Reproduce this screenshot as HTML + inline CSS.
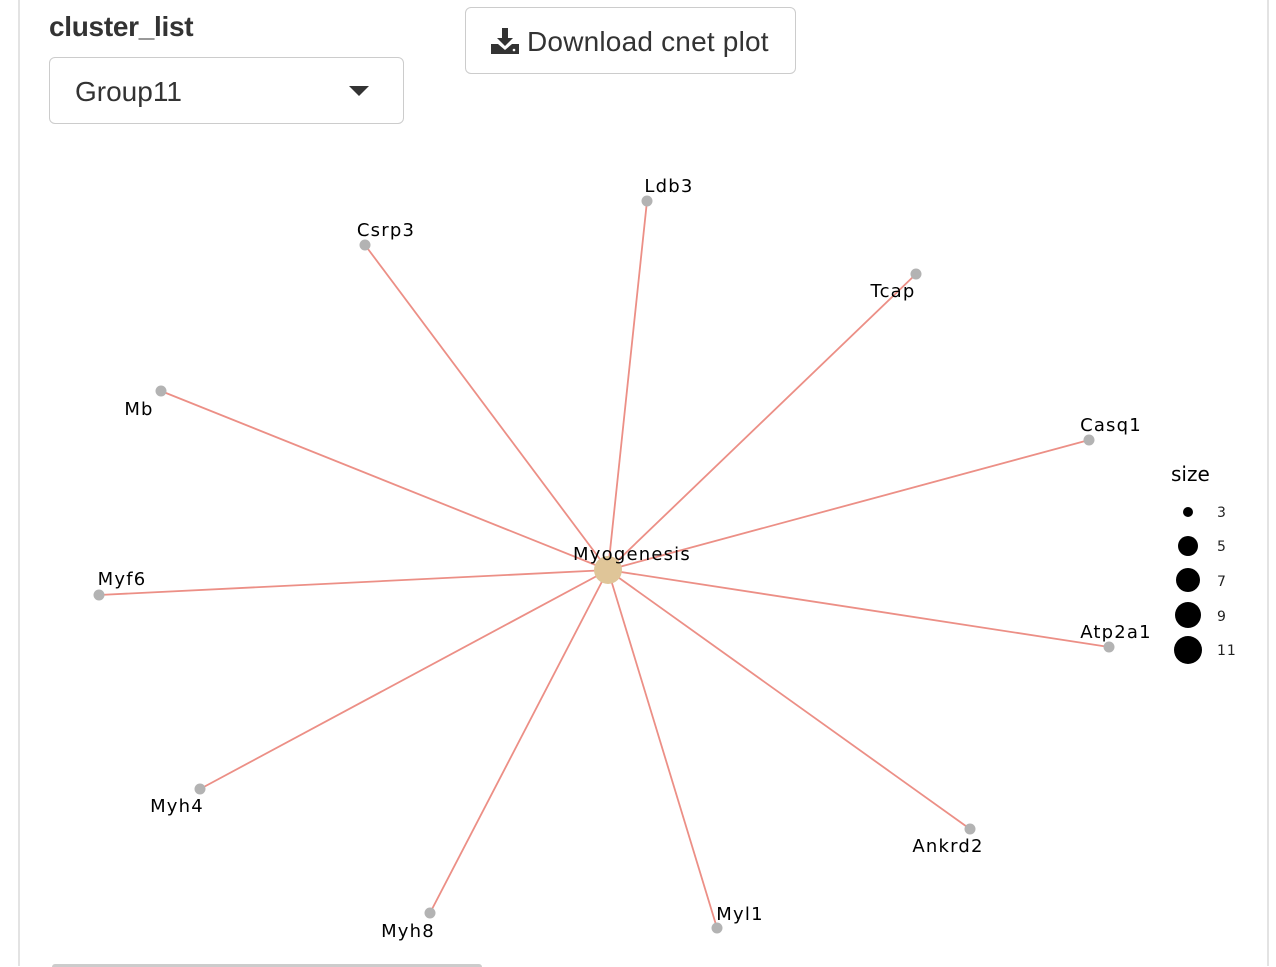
<!DOCTYPE html>
<html><head><meta charset="utf-8"><style>
body{margin:0;width:1276px;height:966px;background:#fff;position:relative;overflow:hidden;font-family:"Liberation Sans",sans-serif;color:#333}
.lb{position:absolute;left:18px;top:0;width:2px;height:966px;background:#e3e3e3}
.rb{position:absolute;left:1267px;top:0;width:2px;height:966px;background:#e3e3e3}
.title{position:absolute;left:49px;top:11px;font-weight:bold;font-size:28px;letter-spacing:-0.3px}
.sel{position:absolute;left:49px;top:57px;width:355px;height:67px;border:1.5px solid #ccc;border-radius:6px;box-sizing:border-box}
.sel span{position:absolute;left:25px;top:18px;font-size:28px;color:#333;letter-spacing:0}
.sel i{position:absolute;left:299px;top:28px;border-left:10px solid transparent;border-right:10px solid transparent;border-top:10px solid #333}
.btn{position:absolute;left:465px;top:7px;width:331px;height:67px;border:1.5px solid #ccc;border-radius:6px;box-sizing:border-box}
.btn span{position:absolute;left:61px;top:18px;font-size:28px;color:#333;letter-spacing:0.2px}
.btn svg{position:absolute;left:25px;top:20px}
.bot{position:absolute;left:52px;top:964px;width:430px;height:3px;background:#ccc;border-radius:3px 3px 0 0}
</style></head><body>
<div class="lb"></div><div class="rb"></div>
<div class="title">cluster_list</div>
<div class="sel"><span>Group11</span><i></i></div>
<div class="btn"><svg width="28" height="26" viewBox="0 0 28 26"><path d="M11 0h6v10h5l-8 8-8-8h5z" fill="#333"/><path d="M0 16h7l7 6 7-6h7v10H0z" fill="#333"/><circle cx="23" cy="22" r="1.3" fill="#fff"/></svg><span>Download cnet plot</span></div>
<div class="bot"></div>
<svg width="1276" height="966" style="position:absolute;left:0;top:0" font-family="DejaVu Sans,sans-serif">
<g stroke="#ec8f86" stroke-width="1.8">
<line x1="608" y1="570" x2="647" y2="201"/><line x1="608" y1="570" x2="365" y2="245"/>
<line x1="608" y1="570" x2="916" y2="274"/><line x1="608" y1="570" x2="161" y2="391"/>
<line x1="608" y1="570" x2="1089" y2="440"/><line x1="608" y1="570" x2="99" y2="595"/>
<line x1="608" y1="570" x2="1109" y2="647"/><line x1="608" y1="570" x2="200" y2="789"/>
<line x1="608" y1="570" x2="970" y2="829"/><line x1="608" y1="570" x2="430" y2="913"/>
<line x1="608" y1="570" x2="717" y2="928"/>
</g>
<g fill="#b3b3b3">
<circle cx="647" cy="201" r="5.5"/><circle cx="365" cy="245" r="5.5"/><circle cx="916" cy="274" r="5.5"/>
<circle cx="161" cy="391" r="5.5"/><circle cx="1089" cy="440" r="5.5"/><circle cx="99" cy="595" r="5.5"/>
<circle cx="1109" cy="647" r="5.5"/><circle cx="200" cy="789" r="5.5"/><circle cx="970" cy="829" r="5.5"/>
<circle cx="430" cy="913" r="5.5"/><circle cx="717" cy="928" r="5.5"/>
</g>
<circle cx="608" cy="570" r="14" fill="#dfc598"/>
<g font-size="18" fill="#000" text-anchor="middle" letter-spacing="1.2">
<text x="669" y="192">Ldb3</text><text x="386" y="236">Csrp3</text><text x="893" y="297">Tcap</text>
<text x="139" y="415">Mb</text><text x="1111" y="431">Casq1</text><text x="122" y="585">Myf6</text>
<text x="1116" y="638">Atp2a1</text><text x="177" y="812">Myh4</text><text x="948" y="852">Ankrd2</text>
<text x="408" y="937">Myh8</text><text x="740" y="920">Myl1</text><text x="632" y="560">Myogenesis</text>
</g>
<text x="1171" y="481" font-size="20" fill="#000">size</text>
<g fill="#000"><circle cx="1188" cy="512" r="5"/><circle cx="1188" cy="546" r="10"/><circle cx="1188" cy="580" r="12"/><circle cx="1188" cy="615" r="13"/><circle cx="1188" cy="650" r="14"/></g>
<g font-size="14" fill="#222" letter-spacing="1"><text x="1217" y="517">3</text><text x="1217" y="551">5</text><text x="1217" y="586">7</text><text x="1217" y="621">9</text><text x="1217" y="655">11</text></g>
</svg>
</body></html>
